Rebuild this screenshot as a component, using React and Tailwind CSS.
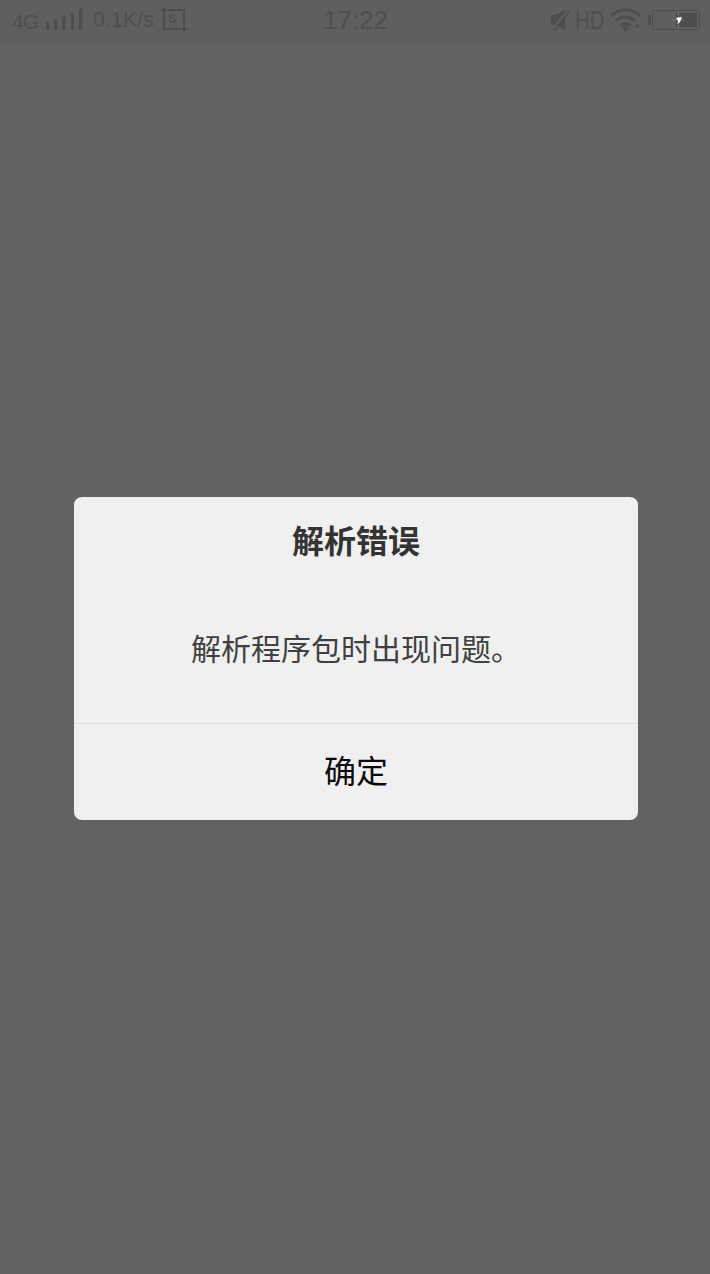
import React from "react";

const sans = { fontFamily: '"Liberation Sans", "Noto Sans CJK SC", sans-serif' };
const INK = "#4e4e4e";

function Signal() {
  return (
    <svg width="37" height="24" viewBox="0 0 37 24" fill={INK}>
      <rect x="0" y="14" width="3" height="8" />
      <rect x="8" y="11" width="3" height="11" />
      <rect x="16" y="8" width="3.5" height="14" />
      <rect x="25" y="5" width="3" height="17" />
      <rect x="33" y="0" width="3.5" height="22" />
    </svg>
  );
}

function Shot() {
  return (
    <svg width="28" height="24" viewBox="0 0 28 24" fill="none" stroke={INK} strokeWidth="2">
      <path d="M0 2H23V24M3 0V21H27" />
    </svg>
  );
}

function Mute() {
  return (
    <svg width="20" height="22" viewBox="0 0 20 22" fill={INK}>
      <path d="M1 6H5L15 1V21L5 16H1Z" />
      <path d="M0 23L19 0" stroke="#5f5f5f" strokeWidth="2" />
      <path d="M4 22L20 2" stroke={INK} strokeWidth="1.6" />
    </svg>
  );
}

function Wifi() {
  return (
    <svg width="32" height="24" viewBox="0 0 32 24" fill="none" stroke={INK} strokeWidth="3">
      <path d="M1 8C9 -0.5 22 -0.5 30 8" />
      <path d="M6 13C11 7.5 20 7.5 25 13" />
      <path d="M10 17.5C13 15 18 15 21 17.5" />
      <path d="M11.5 19.5L15.5 17.5L19.5 19.5L15.5 24Z" fill={INK} stroke="none" />
      <circle cx="27.5" cy="18" r="1.8" fill={INK} stroke="none" />
    </svg>
  );
}

function Battery() {
  return (
    <div className="flex items-center">
      <div className="w-[3px] h-[10px] bg-[#4e4e4e] mr-[1px]" />
      <div className="relative w-[48px] h-[20px] border border-[#4e4e4e] rounded-[2px] p-[2px] flex justify-end">
        <div className="w-[21px] h-full bg-[#4e4e4e]" />
        <svg className="absolute left-[18px] top-[1px]" width="14" height="16" viewBox="0 0 14 16">
          <path d="M7.5 0V16M1 8H13" stroke="#7a7a7a" strokeWidth="0.8" />
          <path d="M5 6L11 5L9 10L6.5 12L7 9Z" fill="#ffffff" />
        </svg>
      </div>
    </div>
  );
}

export default function App() {
  return (
    <div className="w-[710px] h-[1274px] bg-[#626262] flex flex-col" style={sans}>
      <div className="relative h-[44px] bg-[#5f5f5f] flex items-center justify-between pl-[12px] pr-[10px] text-[#4e4e4e]">
        <div className="flex items-center mt-[-4px]">
          <span className="w-[34px] text-[21px] tracking-[-1px] mt-[3px]">4G</span>
          <Signal />
          <span className="text-[21.5px] ml-[10px] mr-[7px]">0.1K/s</span>
          <div className="relative">
            <Shot />
            <span className="absolute left-[7px] top-[3px] text-[13px] leading-[16px] font-bold">S</span>
          </div>
        </div>
        <span className="absolute left-[323px] top-[5px] text-[26px] leading-[30px]">17:22</span>
        <div className="flex items-center mt-[-5px]">
          <Mute />
          <span className="w-[27px] ml-[5px] mr-[8px] text-[25px] leading-[24px] scale-x-[0.82] origin-left whitespace-nowrap">HD</span>
          <Wifi />
          <div className="w-[6px]" />
          <Battery />
        </div>
      </div>
      <div className="flex-1 flex flex-col pt-[453px] pl-[74px]">
        <div className="w-[564px] h-[323px] bg-[#f0f0f0] rounded-[8px] flex flex-col">
          <div className="h-[227px] border-b border-[#dcdcdc] flex flex-col items-center">
            <div className="mt-[25px] text-[32px] leading-[40px] font-bold text-[#333333]">解析错误</div>
            <div className="mt-[68px] text-[30px] leading-[40px] text-[#404040]">解析程序包时出现问题。</div>
          </div>
          <div className="flex-1 flex items-center justify-center text-[32px] text-[#0a0a0a]">确定</div>
        </div>
      </div>
    </div>
  );
}
